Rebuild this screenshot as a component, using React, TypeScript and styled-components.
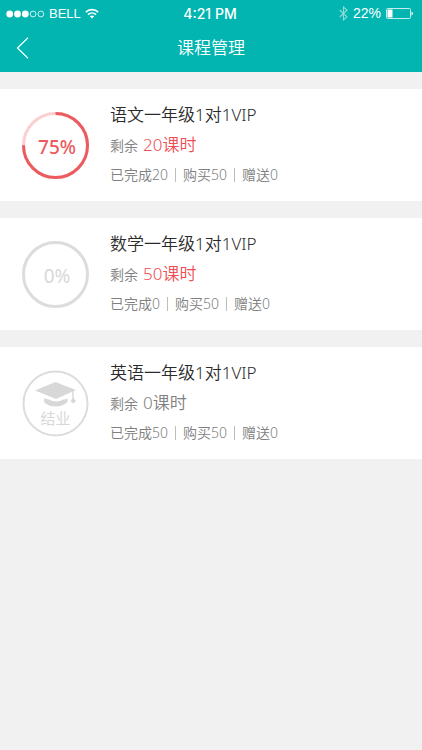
import React from 'react';
import styled, { createGlobalStyle } from 'styled-components';

const GlobalStyle = createGlobalStyle`
  * { box-sizing: border-box; }
  body {
    margin: 0;
    background: #f1f1f1;
    font-family: "Noto Sans", "Noto Sans CJK SC", sans-serif;
    font-weight: 350;
  }
  h1, h2, p, ul { margin: 0; padding: 0; font-weight: inherit; }
`;

const Header = styled.header`
  background: #02b5b1;
  color: #fff;
`;

const StatusBar = styled.div`
  display: grid;
  grid-template-columns: 1fr auto 1fr;
  align-items: center;
  height: 27px;
  padding: 0 8px 0 6px;
  font: 14px/27px "Liberation Sans", sans-serif;
`;

const StatusGroup = styled.div<{ $end?: boolean }>`
  display: flex;
  align-items: center;
  justify-content: ${(p) => (p.$end ? 'flex-end' : 'flex-start')};
  gap: ${(p) => (p.$end ? 5 : 4)}px;
`;

const Carrier = styled.span`
  font-size: 13px;
`;

const Clock = styled.time`
  font-family: Inter, "Liberation Sans", sans-serif;
  font-size: 14px;
  font-weight: 500;
`;

const NavBar = styled.nav`
  display: grid;
  grid-template-columns: 48px 1fr 48px;
  align-items: center;
  height: 45px;
  padding-bottom: 4px;
`;

const BackButton = styled.button`
  display: flex;
  align-items: center;
  height: 41px;
  padding: 0 0 0 16px;
  border: 0;
  background: none;
  color: inherit;
  cursor: pointer;
`;

const PageTitle = styled.h1`
  font-size: 17px;
  line-height: 24px;
  text-align: center;
`;

const CourseList = styled.ul`
  display: flex;
  flex-direction: column;
  gap: 17px;
  padding-top: 17px;
  list-style: none;
`;

const CourseCard = styled.li`
  display: flex;
  align-items: center;
  gap: 21px;
  padding: 11px 22px 13px;
  background: #fff;
`;

const Badge = styled.div<{ $active: boolean }>`
  display: grid;
  flex: none;
  width: 67px;
  height: 67px;
  margin-top: 2px;
  place-items: center;
  color: ${(p) => (p.$active ? '#ec5b5f' : '#d8d8d8')};

  > * { grid-area: 1 / 1; }
`;

const Percent = styled.span<{ $active: boolean }>`
  padding: 4px 0 0 3px;
  font-size: 19px;
  line-height: 24px;
  font-weight: ${(p) => (p.$active ? 500 : 400)};
`;

const Finished = styled.div`
  display: flex;
  flex-direction: column;
  align-items: center;
  padding-top: 2px;
  font-size: 15px;
  line-height: 20px;
  font-weight: 400;
`;

const Details = styled.div`
  min-width: 0;
`;

const CourseName = styled.h2`
  color: #2b2b2b;
  font-size: 17px;
  line-height: 30px;
`;

const Remaining = styled.p`
  display: flex;
  align-items: baseline;
  gap: 5px;
  color: #808080;
  font-size: 14px;
  line-height: 30px;
`;

const Hours = styled.span<{ $active: boolean }>`
  color: ${(p) => (p.$active ? '#ee4d52' : '#808080')};
  font-size: 17px;
`;

const Stats = styled.p`
  display: flex;
  align-items: center;
  color: #808080;
  font-size: 14px;
  line-height: 27px;
`;

const Stat = styled.span`
  display: flex;
  align-items: center;

  & + &::before {
    content: "";
    width: 1px;
    height: 14px;
    margin: 0 7px;
    background: #bdbdbd;
  }
`;

const SignalIcon = () => (
  <svg width="39" height="10" viewBox="0 0 39 10" aria-hidden="true">
    {[0, 1, 2, 3, 4].map((i) => (
      <circle
        key={i}
        cx={3.7 + i * 7.8}
        cy="5"
        r={i < 3 ? 3.4 : 2.9}
        fill={i < 3 ? '#fff' : 'none'}
        stroke={i < 3 ? 'none' : '#fff'}
        strokeWidth="0.8"
      />
    ))}
  </svg>
);

const WifiIcon = () => (
  <svg width="14" height="11" viewBox="0 0 14 11" fill="none" stroke="#fff" strokeWidth="1.7" aria-hidden="true">
    <path d="M0.8 4.2C4.3 0.7 9.7 0.7 13.2 4.2" />
    <path d="M3 6.7C5.3 4.4 8.7 4.4 11 6.7" />
    <path d="M4.8 8.3C6 7.1 8 7.1 9.2 8.3L7 10.6Z" fill="#fff" stroke="none" />
  </svg>
);

const BluetoothIcon = () => (
  <svg width="9" height="15" viewBox="0 0 9 15" fill="none" stroke="#8fdcda" strokeWidth="1.1" aria-hidden="true">
    <path d="M0.7 4L8 10.8L4.5 14V1L8 4.2L0.7 11" />
  </svg>
);

const BatteryIcon = () => (
  <svg width="28" height="11" viewBox="0 0 28 11" aria-hidden="true">
    <rect x="0.5" y="0.5" width="24" height="10" rx="1" fill="none" stroke="#c4eeed" />
    <rect x="1.5" y="1.5" width="5" height="8" fill="#fff" />
    <path d="M25.5 3.5Q28.5 5.5 25.5 7.5Z" fill="#fff" />
  </svg>
);

const BackIcon = () => (
  <svg width="13" height="22" viewBox="0 0 13 22" fill="none" stroke="#fff" strokeWidth="1.2" aria-hidden="true">
    <path d="M12 0.8L1.5 11L12 21.2" />
  </svg>
);

const CapIcon = () => (
  <svg width="42" height="27" viewBox="0 0 42 27" fill="#d8d8d8" aria-hidden="true">
    <path d="M0 9.5L20.5 1L41 9L21 18Z" />
    <path d="M9 17Q10.5 18.4 14 18.5Q18 20.5 21 20.5Q25 20.5 28.5 18.5Q31 18.5 32.5 17V21Q27.5 25.5 20.5 25.5Q13.5 25.5 9 21Z" />
    <path d="M38 10V18.5" fill="none" stroke="#d8d8d8" strokeWidth="1.4" />
    <path d="M38.2 16.5L41 20L38.2 22.5L35.5 20Z" />
  </svg>
);

function Ring({ percent, thin }: { percent: number; thin?: boolean }) {
  const radius = 32;
  const length = 2 * Math.PI * radius;
  return (
    <svg width="67" height="67" viewBox="0 0 67 67" fill="none" aria-hidden="true">
      <circle cx="33.5" cy="33.5" r={radius} stroke={percent > 0 ? '#fbd0d2' : '#dcdcdc'} strokeWidth={thin ? 2 : 3} />
      {percent > 0 && (
        <circle
          cx="33.5"
          cy="33.5"
          r={radius}
          stroke="#ec5b5f"
          strokeWidth="3"
          strokeDasharray={`${(length * percent) / 100} ${length}`}
          transform="rotate(-90 33.5 33.5)"
        />
      )}
    </svg>
  );
}

interface Course {
  name: string;
  remaining: number;
  completed: number;
  purchased: number;
  gifted: number;
  percent: number;
}

const courses: Course[] = [
  { name: '语文一年级1对1VIP', remaining: 20, completed: 20, purchased: 50, gifted: 0, percent: 75 },
  { name: '数学一年级1对1VIP', remaining: 50, completed: 0, purchased: 50, gifted: 0, percent: 0 },
  { name: '英语一年级1对1VIP', remaining: 0, completed: 50, purchased: 50, gifted: 0, percent: 100 },
];

function CourseItem({ course }: { course: Course }) {
  const finished = course.remaining === 0;
  const active = !finished && course.percent > 0;
  return (
    <CourseCard>
      <Badge $active={active}>
        <Ring percent={finished ? 0 : course.percent} thin={finished} />
        {finished ? (
          <Finished>
            <CapIcon />
            结业
          </Finished>
        ) : (
          <Percent $active={active}>{course.percent}%</Percent>
        )}
      </Badge>
      <Details>
        <CourseName>{course.name}</CourseName>
        <Remaining>
          剩余 <Hours $active={!finished}>{course.remaining}课时</Hours>
        </Remaining>
        <Stats>
          <Stat>已完成{course.completed}</Stat>
          <Stat>购买{course.purchased}</Stat>
          <Stat>赠送{course.gifted}</Stat>
        </Stats>
      </Details>
    </CourseCard>
  );
}

export default function App() {
  return (
    <>
      <GlobalStyle />
      <Header>
        <StatusBar>
          <StatusGroup>
            <SignalIcon />
            <Carrier>BELL</Carrier>
            <WifiIcon />
          </StatusGroup>
          <Clock>4:21 PM</Clock>
          <StatusGroup $end>
            <BluetoothIcon />
            <span>22%</span>
            <BatteryIcon />
          </StatusGroup>
        </StatusBar>
        <NavBar>
          <BackButton type="button" aria-label="返回">
            <BackIcon />
          </BackButton>
          <PageTitle>课程管理</PageTitle>
        </NavBar>
      </Header>
      <main>
        <CourseList>
          {courses.map((course) => (
            <CourseItem key={course.name} course={course} />
          ))}
        </CourseList>
      </main>
    </>
  );
}
